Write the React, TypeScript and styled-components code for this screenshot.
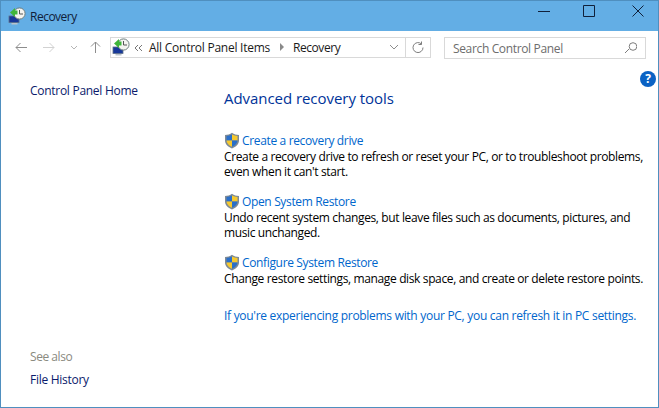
import styled, { createGlobalStyle } from "styled-components";

const GlobalStyle = createGlobalStyle`
  html, body { margin: 0; padding: 0; background: #fff; }
  body { font-family: "Open Sans", "Noto Sans", sans-serif; font-size: 12px; }
`;

const Win = styled.div`
  width: 659px;
  height: 408px;
  box-sizing: border-box;
  border: 1px solid #4f8fbf;
  display: flex;
  flex-direction: column;
  overflow: hidden;
  background: #fff;
`;

const TitleBar = styled.div`
  height: 30px;
  flex-shrink: 0;
  background: #63aee5;
  display: flex;
  align-items: center;
  padding-left: 7px;
  gap: 4px;
  color: #10203a;
`;

const TitleText = styled.span`
  flex-grow: 1;
  letter-spacing: -0.5px;
`;

const WinButton = styled.div<{ $w: number }>`
  width: ${({ $w }) => $w}px;
  height: 24px;
  margin-top: -10px;
  display: flex;
  align-items: center;
  justify-content: center;
`;

const Toolbar = styled.div`
  height: 32px;
  flex-shrink: 0;
  display: flex;
  align-items: center;
  padding-left: 10px;
`;

const NavButton = styled.div<{ $w: number }>`
  width: ${({ $w }) => $w}px;
  height: 20px;
  display: flex;
  align-items: center;
  justify-content: center;
  flex-shrink: 0;
`;

const AddressBar = styled.div`
  width: 318px;
  height: 19px;
  border: 1px solid #d9d9d9;
  display: flex;
  align-items: center;
  padding-left: 1px;
  color: #1a1a1a;
`;

const Crumbs = styled.div`
  flex-grow: 1;
  display: flex;
  align-items: center;
  white-space: nowrap;
`;

const Chevrons = styled.span`
  display: flex;
  margin: 1px 6px 0 4px;
`;

const Crumb = styled.span<{ $spacing: number }>`
  letter-spacing: ${({ $spacing }) => $spacing}px;
`;

const Arrow = styled.span`
  width: 0;
  height: 0;
  border-left: 4px solid #8a8a8a;
  border-top: 4px solid transparent;
  border-bottom: 4px solid transparent;
  margin: 0 9px 0 10px;
`;

const RefreshBox = styled.div`
  width: 24px;
  height: 19px;
  margin-left: 6px;
  border-left: 1px solid #d9d9d9;
  display: flex;
  align-items: center;
  justify-content: center;
`;

const SearchBox = styled.div`
  width: 202px;
  height: 22px;
  margin: 2px 0 0 13px;
  border: 1px solid #d9d9d9;
  display: flex;
  align-items: center;
  justify-content: space-between;
  padding: 0 8px;
  box-sizing: border-box;
  color: #6d6d6d;
  letter-spacing: -0.35px;
`;

const Body = styled.div`
  flex-grow: 1;
  display: flex;
  position: relative;
`;

const Sidebar = styled.div`
  width: 223px;
  flex-shrink: 0;
  box-sizing: border-box;
  padding: 20px 0 19px 29px;
  display: flex;
  flex-direction: column;
`;

const SideLink = styled.div`
  color: #0a1a6b;
  letter-spacing: -0.28px;
  line-height: 16px;
`;

const SeeAlso = styled.div`
  margin-top: auto;
  margin-bottom: 7px;
  color: #8a8a80;
  letter-spacing: -0.45px;
  line-height: 16px;
`;

const Main = styled.div`
  flex-grow: 1;
  padding-top: 25px;
  color: #000;
`;

const Heading = styled.h1`
  margin: 0 0 23px;
  font-size: 15px;
  font-weight: 400;
  line-height: 21px;
  color: #003399;
  letter-spacing: -0.05px;
`;

const Tool = styled.div`
  margin-bottom: 14px;
`;

const ToolLink = styled.div`
  display: flex;
  align-items: center;
  gap: 2px;
  height: 16px;
  margin-bottom: 1px;
  color: #0066cc;
  letter-spacing: -0.35px;
`;

const ToolText = styled.div`
  line-height: 15px;
  letter-spacing: -0.37px;
  white-space: nowrap;
`;

const PcLink = styled.div`
  margin-top: 22px;
  color: #0066cc;
  line-height: 16px;
  letter-spacing: -0.29px;
  white-space: nowrap;
`;

const HelpBadge = styled.div`
  position: absolute;
  top: 8px;
  right: 2px;
  width: 16px;
  height: 16px;
  border-radius: 50%;
  background: #0a62c4;
  color: #fff;
  font-weight: 700;
  font-size: 12px;
  line-height: 16px;
  text-align: center;
`;

function RecoveryIcon() {
  return (
    <svg width="18" height="18" viewBox="0 0 18 18" style={{ flexShrink: 0 }}>
      <rect x="1" y="9" width="10" height="6.5" fill="#17389a" stroke="#5f7088" strokeWidth="0.8" />
      <rect x="3.5" y="16" width="6" height="1.5" fill="#b9c2cc" />
      <circle cx="11.5" cy="6.5" r="5.6" fill="#f4f4f0" stroke="#6f7f7f" />
      <path d="M11.5 3V7H15" fill="none" stroke="#555" strokeWidth="1" />
      <path d="M2 5.5L7 1V3.5H9.5V7.5H7V10Z" fill="#3fb53a" />
    </svg>
  );
}

function Shield() {
  return (
    <svg width="16" height="17" viewBox="0 0 16 17" style={{ flexShrink: 0 }}>
      <path d="M8 .8C10 2.3 12.4 3 15 3V8.5C15 12.2 12 15 8 16.4 4 15 1 12.2 1 8.5V3C3.6 3 6 2.3 8 .8Z" fill="#7d8a96" />
      <path d="M8 2.4V8.4H2.5V3.9C4.5 3.8 6.4 3.3 8 2.4Z" fill="#2a6fc9" />
      <path d="M8 2.4C9.6 3.3 11.5 3.8 13.5 3.9V8.4H8Z" fill="#f6c92f" />
      <path d="M2.5 8.4H8V14.7C5 13.6 2.7 11.4 2.5 8.4Z" fill="#f6c92f" />
      <path d="M8 8.4H13.5C13.3 11.4 11 13.6 8 14.7Z" fill="#2a6fc9" />
    </svg>
  );
}

function Line({ d, w, h, color }: { d: string; w: number; h: number; color: string }) {
  return (
    <svg width={w} height={h} viewBox={`0 0 ${w} ${h}`}>
      <path d={d} fill="none" stroke={color} strokeWidth={1} />
    </svg>
  );
}

const tools = [
  {
    title: "Create a recovery drive",
    lines: [
      "Create a recovery drive to refresh or reset your PC, or to troubleshoot problems,",
      "even when it can't start.",
    ],
  },
  {
    title: "Open System Restore",
    lines: [
      "Undo recent system changes, but leave files such as documents, pictures, and",
      "music unchanged.",
    ],
  },
  {
    title: "Configure System Restore",
    lines: ["Change restore settings, manage disk space, and create or delete restore points."],
  },
];

export default function App() {
  return (
    <Win>
      <GlobalStyle />
      <TitleBar>
        <RecoveryIcon />
        <TitleText>Recovery</TitleText>
        <WinButton $w={32}>
          <Line d="M0 .5H12" w={12} h={1} color="#10203a" />
        </WinButton>
        <WinButton $w={50}>
          <Line d="M.5 .5H11.5V11.5H.5Z" w={12} h={12} color="#10203a" />
        </WinButton>
        <WinButton $w={40}>
          <Line d="M.5 .5L11.5 11.5M11.5 .5L.5 11.5" w={12} h={12} color="#10203a" />
        </WinButton>
      </TitleBar>
      <Toolbar>
        <NavButton $w={20}>
          <Line d="M12 5.5H1M5.5 1L1 5.5L5.5 10" w={12} h={11} color="#8d8d8d" />
        </NavButton>
        <NavButton $w={36}>
          <Line d="M0 5.5H11M6.5 1L11 5.5L6.5 10" w={12} h={11} color="#d2d2d2" />
        </NavButton>
        <NavButton $w={13}>
          <Line d="M1 1L4 4L7 1" w={8} h={5} color="#b5b5b5" />
        </NavButton>
        <NavButton $w={30}>
          <Line d="M5.5 12V1M1 5.5L5.5 1L10 5.5" w={11} h={12} color="#8d8d8d" />
        </NavButton>
        <AddressBar>
          <Crumbs>
            <RecoveryIcon />
            <Chevrons>
              <Line d="M4 1L1 4L4 7M8 1L5 4L8 7" w={9} h={8} color="#777" />
            </Chevrons>
            <Crumb $spacing={-0.25}>All Control Panel Items</Crumb>
            <Arrow />
            <Crumb $spacing={-0.45}>Recovery</Crumb>
          </Crumbs>
          <Line d="M1 1L5 5L9 1" w={10} h={6} color="#8d8d8d" />
          <RefreshBox>
            <Line d="M9.5 3A5 5 0 1 0 11 6.5M9.5 .5V3.5H6.5" w={12} h={12} color="#7d7d7d" />
          </RefreshBox>
        </AddressBar>
        <SearchBox>
          Search Control Panel
          <Line d="M1 11L5 7M5.2 4.5A3.8 3.8 0 1 0 12.8 4.5A3.8 3.8 0 1 0 5.2 4.5Z" w={13} h={12} color="#7d7d7d" />
        </SearchBox>
      </Toolbar>
      <Body>
        <HelpBadge>?</HelpBadge>
        <Sidebar>
          <SideLink>Control Panel Home</SideLink>
          <SeeAlso>See also</SeeAlso>
          <SideLink>File History</SideLink>
        </Sidebar>
        <Main>
          <Heading>Advanced recovery tools</Heading>
          {tools.map((tool) => (
            <Tool key={tool.title}>
              <ToolLink>
                <Shield />
                {tool.title}
              </ToolLink>
              {tool.lines.map((line) => (
                <ToolText key={line}>{line}</ToolText>
              ))}
            </Tool>
          ))}
          <PcLink>If you're experiencing problems with your PC, you can refresh it in PC settings.</PcLink>
        </Main>
      </Body>
    </Win>
  );
}
